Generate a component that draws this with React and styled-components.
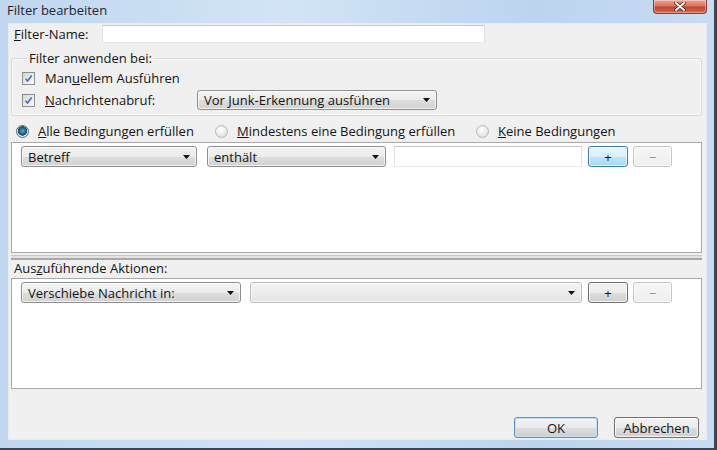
import React from 'react';
import styled, { createGlobalStyle } from 'styled-components';

const Global = createGlobalStyle`
  html, body { margin: 0; padding: 0; }
  body {
    width: 717px; height: 450px; overflow: hidden;
    font-family: "Open Sans", "Liberation Sans", sans-serif;
    font-size: 13px; color: #141414;
  }
`;

const Window = styled.div`
  width: 717px; height: 450px; box-sizing: border-box;
  display: flex; flex-direction: column;
  padding: 0 7px 8px 8px;
  background: linear-gradient(90deg, #c0d7ef 0%, #d2e4f6 40%, #bcd4ee 75%, #c8dcf2 100%);
  border-right: 3px solid #3b4654;
  border-bottom: 2px solid #3b4654;
`;

const TitleBar = styled.div`
  height: 23px; flex: none;
  display: flex; align-items: flex-start; justify-content: space-between;
`;

const Title = styled.div`
  padding-top: 2px; margin-left: -1px;
  line-height: 16px; color: #1e2430;
`;

const CloseBtn = styled.div`
  width: 54px; height: 14px; box-sizing: border-box;
  display: flex; align-items: center; justify-content: center;
  border: 1px solid #8c3a2c; border-top: none;
  border-radius: 0 0 4px 4px;
  background: linear-gradient(180deg, #e9a596 0%, #d9735f 45%, #c6432f 55%, #d8684f 100%);
  box-shadow: inset 0 0 0 1px rgba(255,255,255,0.35);
`;

const Content = styled.div`
  flex: 1; min-height: 0;
  display: flex; flex-direction: column;
  background: #f0f0f0;
  border: 1px solid #e4edf6;
  padding: 0 4px 1px 2px;
`;

const NameRow = styled.div`
  margin-top: 1px; height: 18px;
  display: flex; align-items: center;
`;

const FieldLabel = styled.span`
  width: ${p => p.$w || 'auto'}; flex: none;
  padding-left: ${p => p.$pl || 0}px; box-sizing: border-box;
  white-space: nowrap; line-height: 16px;
`;

const Key = styled.span`text-decoration: underline;`;

const TextInput = styled.div`
  width: ${p => p.$w}px; height: ${p => p.$h || 18}px; box-sizing: border-box; flex: none;
  background: #fff;
  border: 1px solid;
  border-color: #c3c8cf #dfe3e8 #e6e9ee #dfe3e8;
`;

const Group = styled.fieldset`
  margin: 8px 0 0 0; min-width: 0;
  border: 1px solid #d5dadf; border-radius: 3px;
  padding: 3px 10px 5px 10px;
  display: flex; flex-direction: column; gap: 2px;
  box-shadow: inset 0 0 0 1px #fafafa;
`;

const Legend = styled.legend`
  padding: 0 2px; margin-left: 5px;
  line-height: 14px;
`;

const CheckRow = styled.div`
  height: 20px; display: flex; align-items: center;
`;

const CheckBox = styled.span`
  width: 13px; height: 13px; box-sizing: border-box; flex: none;
  border: 1px solid #8f8f8f;
  background: linear-gradient(135deg, #d6d6d6, #fbfbfb);
  display: flex; align-items: center; justify-content: center;
  margin-right: 10px;
`;

const Select = styled.div`
  width: ${p => p.$w}px; height: ${p => p.$h || 21}px; box-sizing: border-box; flex: none;
  display: flex; align-items: center; justify-content: space-between;
  padding: 0 6px 0 6px;
  border: 1px solid ${p => (p.$disabled ? '#b7babc' : '#8e8f8f')};
  border-radius: 3px;
  background: ${p => p.$disabled
    ? 'linear-gradient(180deg, #f4f4f4 0%, #ececec 50%, #e4e4e4 100%)'
    : 'linear-gradient(180deg, #f3f3f3 0%, #ebebeb 50%, #dddddd 51%, #d2d2d2 100%)'};
  box-shadow: inset 0 0 0 1px rgba(255,255,255,0.7);
  white-space: nowrap;
`;

const RadioRow = styled.div`
  margin-top: 7px; height: 16px; padding-left: 5px;
  display: flex; align-items: center;
`;

const RadioItem = styled.div`
  width: ${p => p.$w ? p.$w + 'px' : 'auto'}; flex: none;
  display: flex; align-items: center; white-space: nowrap;
`;

const RadioDot = styled.span`
  width: 13px; height: 13px; box-sizing: border-box; border-radius: 50%; flex: none;
  margin-right: 9px;
  border: 1px solid ${p => (p.$on ? '#4c6c7c' : '#b9b9b9')};
  background: ${p => (p.$on
    ? 'radial-gradient(circle at 50% 45%, #5ab0d6 0%, #1d6c8e 35%, #174f67 55%, #e6e6e6 60%, #f6f6f6 100%)'
    : 'radial-gradient(circle at 40% 35%, #ffffff 0%, #e3e3e3 70%, #d0d0d0 100%)')};
`;

const ListBox = styled.div`
  margin-top: ${p => p.$mt}px; height: 111px; box-sizing: border-box; flex: none;
  background: #fff;
  border: 1px solid #a9a9a9;
  padding: 3px 0 0 9px;
`;

const ItemRow = styled.div`
  height: 21px; display: flex; align-items: stretch;
`;

const Gap = styled.span`width: ${p => p.$w}px; flex: none;`;

const Button = styled.div`
  width: ${p => p.$w}px; height: ${p => p.$h || 21}px; box-sizing: border-box; flex: none;
  display: flex; align-items: center; justify-content: center;
  border-radius: 3px;
  border: 1px solid ${p => ({ hot: '#3c7fb1', disabled: '#c2c6c9', def: '#5a8fc0' }[p.$kind] || '#707070')};
  color: ${p => (p.$kind === 'disabled' ? '#8a8a8a' : '#141414')};
  background: ${p => ({
    hot: 'linear-gradient(180deg, #eaf6fd 0%, #d9f0fc 50%, #bee6fd 51%, #a7d9f5 100%)',
    disabled: 'linear-gradient(180deg, #f6f6f6, #efefef)',
  }[p.$kind] || 'linear-gradient(180deg, #f2f2f2 0%, #ebebeb 50%, #dddddd 51%, #cfcfcf 100%)')};
  box-shadow: ${p => (p.$kind === 'def'
    ? 'inset 0 0 0 1px #bfe4f9'
    : 'inset 0 0 0 1px rgba(255,255,255,0.75)')};
  line-height: 14px;
`;

const Splitter = styled.div`
  margin-top: 2px; height: 2px; flex: none;
  border-top: 1px solid #c8c8c8;
  border-bottom: 2px solid #a8a8a8;
  background: #e2e2e2;
`;

const SectionLabel = styled.div`
  height: 16px; line-height: 16px; padding-left: 3px; flex: none;
`;

const ButtonRow = styled.div`
  margin-top: auto; padding-right: 3px;
  display: flex; justify-content: flex-end; gap: 16px;
`;

const Arrow = () => (
  <svg width="7" height="4" viewBox="0 0 7 4"><polygon points="0,0 7,0 3.5,4" fill="#111" /></svg>
);

const Check = () => (
  <svg width="9" height="9" viewBox="0 0 9 9">
    <path d="M1.5 4.8 L3.6 7 L7.6 1.6" stroke="#4a6cb0" strokeWidth="1.6" fill="none" />
  </svg>
);

const CloseGlyph = () => (
  <svg width="12" height="9" viewBox="0 0 12 9">
    <path d="M2 1 L10 8 M10 1 L2 8" stroke="#5a1c12" strokeWidth="3.6" strokeLinecap="round" />
    <path d="M2 1 L10 8 M10 1 L2 8" stroke="#ffffff" strokeWidth="2" strokeLinecap="round" />
  </svg>
);

export default function App() {
  return (
    <>
      <Global />
      <Window>
        <TitleBar>
          <Title>Filter bearbeiten</Title>
          <CloseBtn><CloseGlyph /></CloseBtn>
        </TitleBar>
        <Content>
          <NameRow>
            <FieldLabel $w="91px" $pl={3}><Key>F</Key>ilter-Name:</FieldLabel>
            <TextInput $w={383} />
          </NameRow>

          <Group>
            <Legend>Filter anwenden bei:</Legend>
            <CheckRow>
              <CheckBox><Check /></CheckBox>
              <FieldLabel>Man<Key>u</Key>ellem Ausführen</FieldLabel>
            </CheckRow>
            <CheckRow>
              <CheckBox><Check /></CheckBox>
              <FieldLabel $w="152px"><Key>N</Key>achrichtenabruf:</FieldLabel>
              <Select $w={240} $h={20}>Vor Junk-Erkennung ausführen<Arrow /></Select>
            </CheckRow>
          </Group>

          <RadioRow>
            <RadioItem $w={199}><RadioDot $on /><span><Key>A</Key>lle Bedingungen erfüllen</span></RadioItem>
            <RadioItem $w={261}><RadioDot /><span><Key>M</Key>indestens eine Bedingung erfüllen</span></RadioItem>
            <RadioItem><RadioDot /><span><Key>K</Key>eine Bedingungen</span></RadioItem>
          </RadioRow>

          <ListBox $mt={3}>
            <ItemRow>
              <Select $w={176}>Betreff<Arrow /></Select>
              <Gap $w={10} />
              <Select $w={179}>enthält<Arrow /></Select>
              <Gap $w={8} />
              <TextInput $w={188} $h={21} />
              <Gap $w={6} />
              <Button $w={40} $kind="hot">+</Button>
              <Gap $w={5} />
              <Button $w={39} $kind="disabled">−</Button>
            </ItemRow>
          </ListBox>

          <Splitter />
          <SectionLabel>Aus<Key>z</Key>uführende Aktionen:</SectionLabel>

          <ListBox $mt={2}>
            <ItemRow>
              <Select $w={220}>Verschiebe Nachricht in:<Arrow /></Select>
              <Gap $w={9} />
              <Select $w={332} $disabled><span /><Arrow /></Select>
              <Gap $w={6} />
              <Button $w={40}>+</Button>
              <Gap $w={5} />
              <Button $w={39} $kind="disabled">−</Button>
            </ItemRow>
          </ListBox>

          <ButtonRow>
            <Button $w={84} $kind="def">OK</Button>
            <Button $w={85}>Abbrechen</Button>
          </ButtonRow>
        </Content>
      </Window>
    </>
  );
}
